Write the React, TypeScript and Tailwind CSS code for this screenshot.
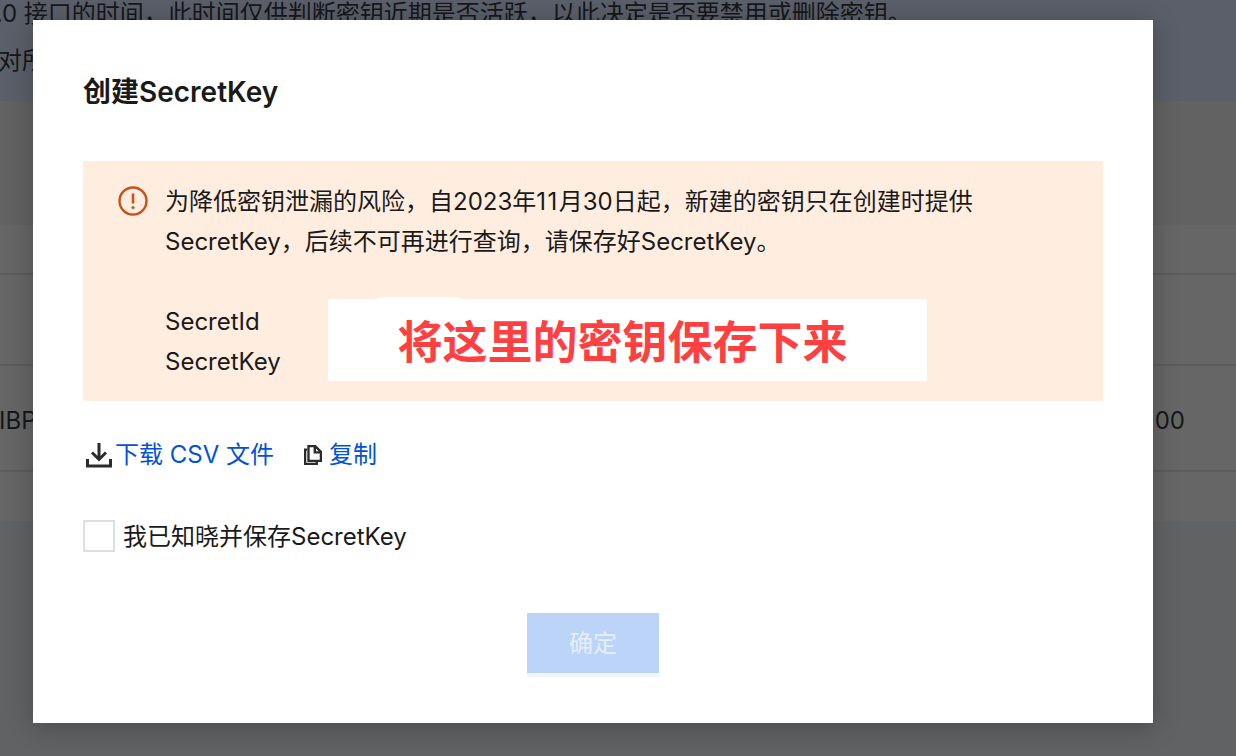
const font = { fontFamily: 'Inter, "Noto Sans CJK SC", sans-serif' };

function DownloadIcon() {
    return (
        <svg width="26" height="26" viewBox="0 0 26 26" fill="none" stroke="#2b2b2b" strokeWidth="3">
            <path d="M13 1v16M6 10.500l7 7 7-7M1.500 17v7h23v-7" />
        </svg>
    );
}

function CopyIcon() {
    return (
        <svg width="18" height="20" viewBox="0 0 20 22" fill="none" stroke="#2b2b2b" strokeWidth="2.600">
            <path d="M3.500 5H1.200v15.800h13V18" />
            <path d="M5 1.200h7.500L18.800 7.500v10H5z" />
            <path d="M12 1.200V8h6.800" />
        </svg>
    );
}

function WarnIcon() {
    return (
        <svg width="30" height="30" viewBox="0 0 30 30" fill="none">
            <circle cx="15" cy="15" r="13.500" stroke="#c9511d" strokeWidth="2.400" />
            <path d="M15 7.500v10" stroke="#c9511d" strokeWidth="2.600" />
            <circle cx="15" cy="21.500" r="1.600" fill="#c9511d" />
        </svg>
    );
}

function Background() {
    return (
        <div className="flex flex-col h-[756px] bg-[#616264] text-[24px] text-[#15171b] overflow-hidden">
            <div className="h-[101px] shrink-0 bg-[#5b5f69] overflow-hidden whitespace-nowrap leading-[46px]">
                <div className="-mt-[9px] -ml-[19px]">2.0 接口的时间，此时间仅供判断密钥近期是否活跃，以此决定是否要禁用或删除密钥。</div>
                <div className="-ml-[2px] mt-[1px]">对所</div>
            </div>
            <div className="h-[124px] shrink-0 bg-[#626262]" />
            <div className="h-[50px] shrink-0 bg-[#666666] border-b-2 border-[#5c5c5c]" />
            <div className="h-[91px] shrink-0 bg-[#666666] border-b-2 border-[#5c5c5c]" />
            <div className="h-[106px] shrink-0 bg-[#666666] border-b-2 border-[#5c5c5c] flex items-center justify-between whitespace-nowrap pt-[5px]">
                <span className="-ml-[1px]">IBP</span>
                <span className="mr-[51px]">00</span>
            </div>
            <div className="h-[49px] shrink-0 bg-[#666666]" />
        </div>
    );
}

export default function App() {
    return (
        <div className="relative h-[756px] w-[1236px] overflow-hidden" style={font}>
            <Background />
            <div className="absolute left-[33px] top-[20px] w-[1120px] h-[703px] bg-white px-[50px] shadow-[0_4px_24px_rgba(0,0,0,0.25)] text-[#1a1a1a] flex flex-col">
                <h1 className="mt-[54px] text-[28px] leading-[36px] font-semibold">创建SecretKey</h1>
                <div className="relative mt-[51px] h-[240px] bg-[#ffeee0] pl-[35px] pt-[20px] flex gap-[17px] text-[24px] leading-[40px]">
                    <div className="h-[40px] flex items-center shrink-0">
                        <WarnIcon />
                    </div>
                    <div className="w-[820px] mt-[1px]">
                        <p>为降低密钥泄漏的风险，自2023年<span className="tracking-[1.5px]">11</span>月30日起，新建的密钥只在创建时提供SecretKey，后续不可再进行查询，请保存好SecretKey。</p>
                        <p className="mt-[40px]">SecretId</p>
                        <p>SecretKey</p>
                    </div>
                    <div className="absolute left-[245px] top-[138px] w-[599px] h-[82px] bg-white flex items-center justify-center pr-[10px] pt-[6px] text-[45px] font-bold text-[#ff4040]">
                        <span className="absolute left-[50px] -top-[2px] w-[82px] h-[2px] bg-white" />
                        将这里的密钥保存下来
                    </div>
                </div>
                <div className="mt-[34px] h-[40px] flex items-center text-[24px] text-[#0052d9]">
                    <span className="ml-[3px] flex items-center gap-[3px]">
                        <DownloadIcon />
                        下载 CSV 文件
                    </span>
                    <span className="ml-[30px] flex items-center gap-[7px]">
                        <CopyIcon />
                        复制
                    </span>
                </div>
                <label className="mt-[44px] flex items-center gap-[8px] text-[24px] leading-[32px]">
                    <span className="w-[32px] h-[32px] border-2 border-[#dcdfe5] bg-white shrink-0" />
                    <span className="mt-[2px]">我已知晓并保存SecretKey</span>
                </label>
                <div className="mt-[60px] flex justify-center">
                    <button className="w-[132px] h-[64px] pt-[2px] bg-[#bbd4f8] border-b-4 border-[#f0f6fd] text-[#e6effc] text-[24px]">确定</button>
                </div>
            </div>
        </div>
    );
}
